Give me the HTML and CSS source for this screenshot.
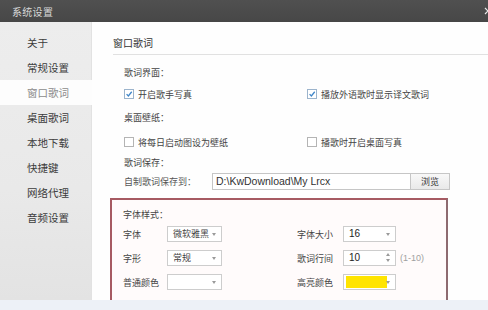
FILE: index.html
```html
<!DOCTYPE html>
<html lang="zh-CN">
<head>
  <meta charset="UTF-8">
  <title>系统设置</title>
  <link rel="stylesheet" href="styles.css">
</head>
<body>
  <div class="window">
    <div class="titlebar">
      <span class="title">系统设置</span>
      <svg class="close" viewBox="0 0 8 8"><path d="M1 1 L7 7 M7 1 L1 7" /></svg>
    </div>

    <div class="main">
      <ul class="nav">
        <li>关于</li>
        <li>常规设置</li>
        <li class="active">窗口歌词</li>
        <li>桌面歌词</li>
        <li>本地下载</li>
        <li>快捷键</li>
        <li>网络代理</li>
        <li>音频设置</li>
      </ul>

      <div class="content">
        <h2 class="page-title">窗口歌词</h2>

        <div class="section">
          <div class="group-title">歌词界面：</div>
          <div class="check-row">
            <label class="check">
              <span class="box checked"><svg viewBox="0 0 10 10"><path d="M2 5.2 L4.2 7.4 L8.4 2.2" /></svg></span>开启歌手写真
            </label>
            <label class="check">
              <span class="box checked"><svg viewBox="0 0 10 10"><path d="M2 5.2 L4.2 7.4 L8.4 2.2" /></svg></span>播放外语歌时显示译文歌词
            </label>
          </div>

          <div class="group-title spaced">桌面壁纸：</div>
          <div class="check-row spaced">
            <label class="check"><span class="box"></span>将每日启动图设为壁纸</label>
            <label class="check"><span class="box"></span>播歌时开启桌面写真</label>
          </div>

          <div class="group-title">歌词保存：</div>
          <div class="path-row">
            <span class="path-label">自制歌词保存到：</span>
            <div class="path-input">D:\KwDownload\My Lrcx</div>
            <button class="browse">浏览</button>
          </div>
        </div>

        <div class="style-box">
          <div class="group-title">字体样式：</div>
          <div class="style-grid">
            <div class="field">
              <span class="field-label">字体</span>
              <div class="select">微软雅黑</div>
            </div>
            <div class="field right">
              <span class="field-label">字体大小</span>
              <div class="select num">16</div>
            </div>
            <div class="field">
              <span class="field-label">字形</span>
              <div class="select">常规</div>
            </div>
            <div class="field right">
              <span class="field-label">歌词行间</span>
              <div class="select num spin">10</div>
              <span class="hint">(1-10)</span>
            </div>
            <div class="field">
              <span class="field-label">普通颜色</span>
              <div class="select"></div>
            </div>
            <div class="field right">
              <span class="field-label">高亮颜色</span>
              <div class="select color"><span class="swatch"></span></div>
            </div>
          </div>
        </div>
      </div>
    </div>

    <div class="statusbar"></div>
  </div>
</body>
</html>
```

FILE: styles.css
```css
* {
  box-sizing: border-box;
  margin: 0;
  padding: 0;
}

body {
  font-family: "Noto Sans CJK SC", "Noto Sans", sans-serif;
  background: #fff;
  overflow: hidden;
}

.window {
  width: 488px;
  height: 310px;
  display: flex;
  flex-direction: column;
  overflow: hidden;
}

.titlebar {
  height: 22px;
  background: linear-gradient(#505050, #474747);
  display: flex;
  align-items: center;
  padding-left: 12px;
  overflow: hidden;
}

.title {
  color: #d8d8d8;
  font-size: 10px;
  letter-spacing: 0.3px;
}

.close {
  margin-left: auto;
  margin-right: -4px;
  width: 8px;
  height: 8px;
  fill: none;
  stroke: #e8e8e8;
  stroke-width: 1.2;
}

.main {
  height: 278px;
  display: flex;
  overflow: hidden;
}

.nav {
  list-style: none;
  width: 92px;
  flex-shrink: 0;
  padding-top: 8px;
  background: linear-gradient(#ededed, #e9e9e9 60%, #e3e3e3);
  border-right: 1px solid #e2e2e2;
}

.nav li {
  height: 25px;
  line-height: 25px;
  padding-left: 27px;
  font-size: 10.5px;
  color: #3c3c3c;
}

.nav li.active {
  background: #fdfdfd;
  color: #8c8c8c;
  margin-right: -1px;
}

.content {
  flex: 1;
  background: #fefefe;
}

.page-title {
  margin-left: 21px;
  padding-top: 10px;
  height: 33px;
  line-height: 22px;
  font-size: 10px;
  font-weight: normal;
  color: #333;
  border-bottom: 1px solid #e1e1e1;
}

.section {
  margin-left: 32px;
  padding-top: 8px;
}

.group-title {
  height: 20px;
  line-height: 20px;
  font-size: 9px;
  color: #444;
}

.group-title.spaced {
  margin-top: 3px;
}

.check-row {
  height: 22px;
  display: flex;
  align-items: center;
}

.check-row.spaced {
  margin-top: 3px;
}

.check {
  display: flex;
  align-items: center;
  font-size: 9px;
  color: #444;
}

.check:first-child {
  width: 183px;
}

.box {
  width: 10px;
  height: 10px;
  border: 1px solid #b4b4b4;
  background: #fff;
  margin-right: 4px;
  display: flex;
}

.box.checked {
  border-color: #9cb4cc;
}

.box svg {
  width: 100%;
  height: 100%;
  fill: none;
  stroke: #3f86c9;
  stroke-width: 1.6;
}

.path-row {
  height: 17px;
  display: flex;
  align-items: center;
}

.path-label {
  width: 88px;
  font-size: 9px;
  color: #555;
}

.path-input {
  width: 199px;
  height: 17px;
  border: 1px solid #c6c6c6;
  background: #fff;
  padding-left: 3px;
  font-family: "Liberation Sans", sans-serif;
  font-size: 10.5px;
  line-height: 15px;
  color: #333;
}

.browse {
  width: 40px;
  height: 17px;
  margin-left: -1px;
  border: 1px solid #c6c6c6;
  background: linear-gradient(#f8f8f8, #e9e9e9);
  font-family: "Noto Sans CJK SC", sans-serif;
  font-size: 9px;
  color: #333;
}

.style-box {
  margin: 8px 0 0 18px;
  width: 338px;
  height: 112px;
  border: 2px solid #a65a62;
  border-right-color: #8e6a70;
  background: #fffbfb;
  padding: 5px 0 0 11px;
}

.style-grid {
  display: grid;
  grid-template-columns: 174px auto;
  grid-auto-rows: 18px;
  row-gap: 6px;
}

.field {
  display: flex;
  align-items: center;
  font-size: 9px;
  color: #444;
}

.field-label {
  width: 44px;
}

.field.right .field-label {
  width: 46px;
}

.select {
  position: relative;
  width: 55px;
  height: 16px;
  border: 1px solid #cdcdcd;
  background: #fff;
  padding-left: 5px;
  line-height: 14px;
  font-size: 9px;
  color: #444;
}

.select::after {
  content: "";
  position: absolute;
  right: 5px;
  top: 6px;
  border-left: 2.5px solid transparent;
  border-right: 2.5px solid transparent;
  border-top: 3px solid #9a9a9a;
}

.select.num {
  width: 53px;
  font-family: "Liberation Sans", sans-serif;
  font-size: 10px;
  color: #222;
}

.select.spin::before {
  content: "";
  position: absolute;
  right: 5px;
  top: 2px;
  border-left: 2.5px solid transparent;
  border-right: 2.5px solid transparent;
  border-bottom: 3px solid #9a9a9a;
}

.select.spin::after {
  top: 8px;
}

.select.color {
  width: 53px;
  padding: 1px 2px;
}

.swatch {
  display: block;
  width: 41px;
  height: 12px;
  background: #ffe400;
}

.hint {
  margin-left: 4px;
  font-family: "Liberation Sans", sans-serif;
  font-size: 9px;
  color: #a0a0a0;
}

.statusbar {
  height: 10px;
  background: #edf1f7;
}
```
